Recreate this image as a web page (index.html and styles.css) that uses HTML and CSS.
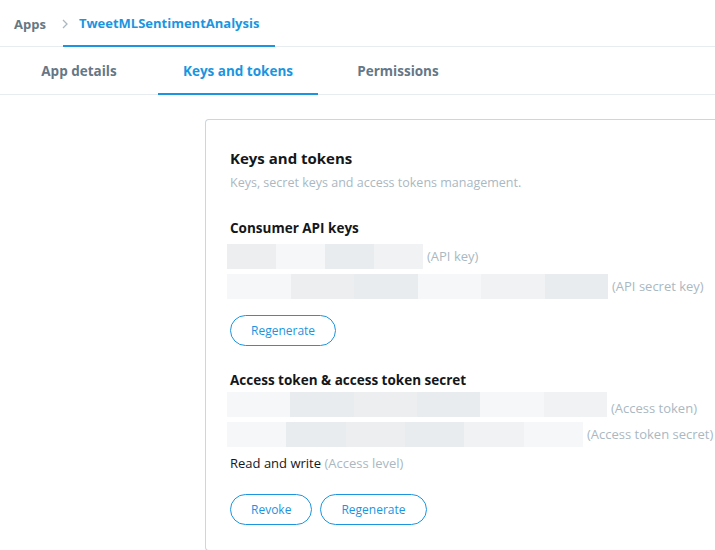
FILE: index.html
```html
<!DOCTYPE html>
<html>
<head>
<meta charset="utf-8">
<link rel="stylesheet" href="styles.css">
</head>
<body>
<header class="crumbs">
  <span class="crumb">Apps</span>
  <svg class="chev" width="8" height="12" viewBox="0 0 8 12"><path d="M2 2l4 4-4 4" fill="none" stroke="#aab8c2" stroke-width="1.3"/></svg>
  <span class="crumb current">TweetMLSentimentAnalysis</span>
</header>
<nav class="tabs">
  <span class="tab">App details</span>
  <span class="tab active">Keys and tokens</span>
  <span class="tab">Permissions</span>
</nav>
<main class="content">
  <section class="card">
    <h1 class="title">Keys and tokens</h1>
    <p class="subtitle">Keys, secret keys and access tokens management.</p>

    <h2 class="section">Consumer API keys</h2>
    <div class="keyrow">
      <div class="blur w196"><i class="b1"></i><i class="b2"></i><i class="b3"></i><i class="b4"></i></div>
      <span class="hint">(API key)</span>
    </div>
    <div class="keyrow">
      <div class="blur w381"><i class="b2"></i><i class="b1"></i><i class="b3"></i><i class="b2"></i><i class="b4"></i><i class="b3"></i></div>
      <span class="hint">(API secret key)</span>
    </div>
    <div class="actions">
      <button class="btn">Regenerate</button>
    </div>

    <h2 class="section second">Access token &amp; access token secret</h2>
    <div class="keyrow">
      <div class="blur w380"><i class="b2"></i><i class="b3"></i><i class="b1"></i><i class="b3"></i><i class="b2"></i><i class="b4"></i></div>
      <span class="hint low">(Access token)</span>
    </div>
    <div class="keyrow">
      <div class="blur w356"><i class="b2"></i><i class="b3"></i><i class="b1"></i><i class="b3"></i><i class="b4"></i><i class="b2"></i></div>
      <span class="hint">(Access token secret)</span>
    </div>
    <p class="level">Read and write <span class="hint">(Access level)</span></p>
    <div class="actions wide">
      <button class="btn">Revoke</button>
      <button class="btn">Regenerate</button>
    </div>
  </section>
</main>
</body>
</html>
```

FILE: styles.css
```css
* { box-sizing: border-box; }
html, body { margin: 0; padding: 0; background: #fff; }
body {
  font-family: "Open Sans", "Noto Sans", sans-serif;
  color: #14171a;
  width: 715px;
  height: 550px;
  overflow: hidden;
}
.crumbs {
  height: 47px;
  display: flex;
  align-items: center;
  padding-left: 14px;
  padding-top: 1px;
  border-bottom: 1px solid #e6ecf0;
  font-size: 13px;
  font-weight: 700;
}
.crumb { color: #657786; }
.chev { margin: 0 -6px 0 15px; }
.crumb.current {
  color: #1b95e0;
  align-self: stretch;
  display: flex;
  align-items: center;
  padding: 0 16px;
  border-bottom: 2px solid #1b95e0;
  margin-bottom: -1px;
}
.tabs {
  height: 48px;
  display: flex;
  border-bottom: 1px solid #e6ecf0;
}
.tab {
  display: flex;
  align-items: center;
  justify-content: center;
  padding-top: 2px;
  font-size: 13.5px;
  font-weight: 700;
  color: #657786;
  width: 160px;
  margin-bottom: -1px;
  border-bottom: 2px solid transparent;
}
.tab:first-child { width: 158px; }
.tab.active { color: #1b95e0; border-bottom-color: #1b95e0; }
.content {
  padding: 24px 0 0 205px;
}
.card {
  border: 1px solid #ccd6dd;
  border-right: none;
  border-radius: 4px 0 0 4px;
  padding: 28px 0 24px 24px;
  height: 432px;
}
.title {
  margin: 0;
  font-size: 15px;
  font-weight: 700;
  line-height: 20px;
}
.subtitle {
  margin: 7px 0 0;
  font-size: 12.5px;
  color: #aab8c2;
  line-height: 16px;
}
.section {
  margin: 28px 0 4px;
  font-size: 13.5px;
  font-weight: 700;
  line-height: 18px;
}
.section.second { margin: 25px 0 0; }
.keyrow {
  display: flex;
  align-items: center;
  height: 30px;
}
.blur {
  height: 25px;
  display: flex;
  background: #f2f4f5;
  margin-left: -3px;
}
.blur i { flex: 1; display: block; }
.blur .b1 { background: #eceef0; }
.blur .b2 { background: #f5f7f8; }
.blur .b3 { background: #e9ecee; }
.blur .b4 { background: #f0f2f3; }
.w196 { width: 196px; }
.w381 { width: 381px; }
.w380 { width: 380px; }
.w356 { width: 356px; }
.hint {
  color: #aab8c2;
  font-size: 13px;
  margin-left: 4px;
}
.hint.low { padding-top: 8px; }
.level {
  margin: 5px 0 0;
  font-size: 13px;
}
.level .hint { margin-left: 0; }
.actions {
  display: flex;
  gap: 8px;
  margin-top: 14px;
}
.actions.wide { margin-top: 22px; }
.btn {
  font-family: inherit;
  background: #fff;
  border: 1px solid #1b95e0;
  color: #1b95e0;
  border-radius: 16px;
  height: 31px;
  padding: 0 20px;
  font-size: 12px;
  font-weight: 400;
}
```
